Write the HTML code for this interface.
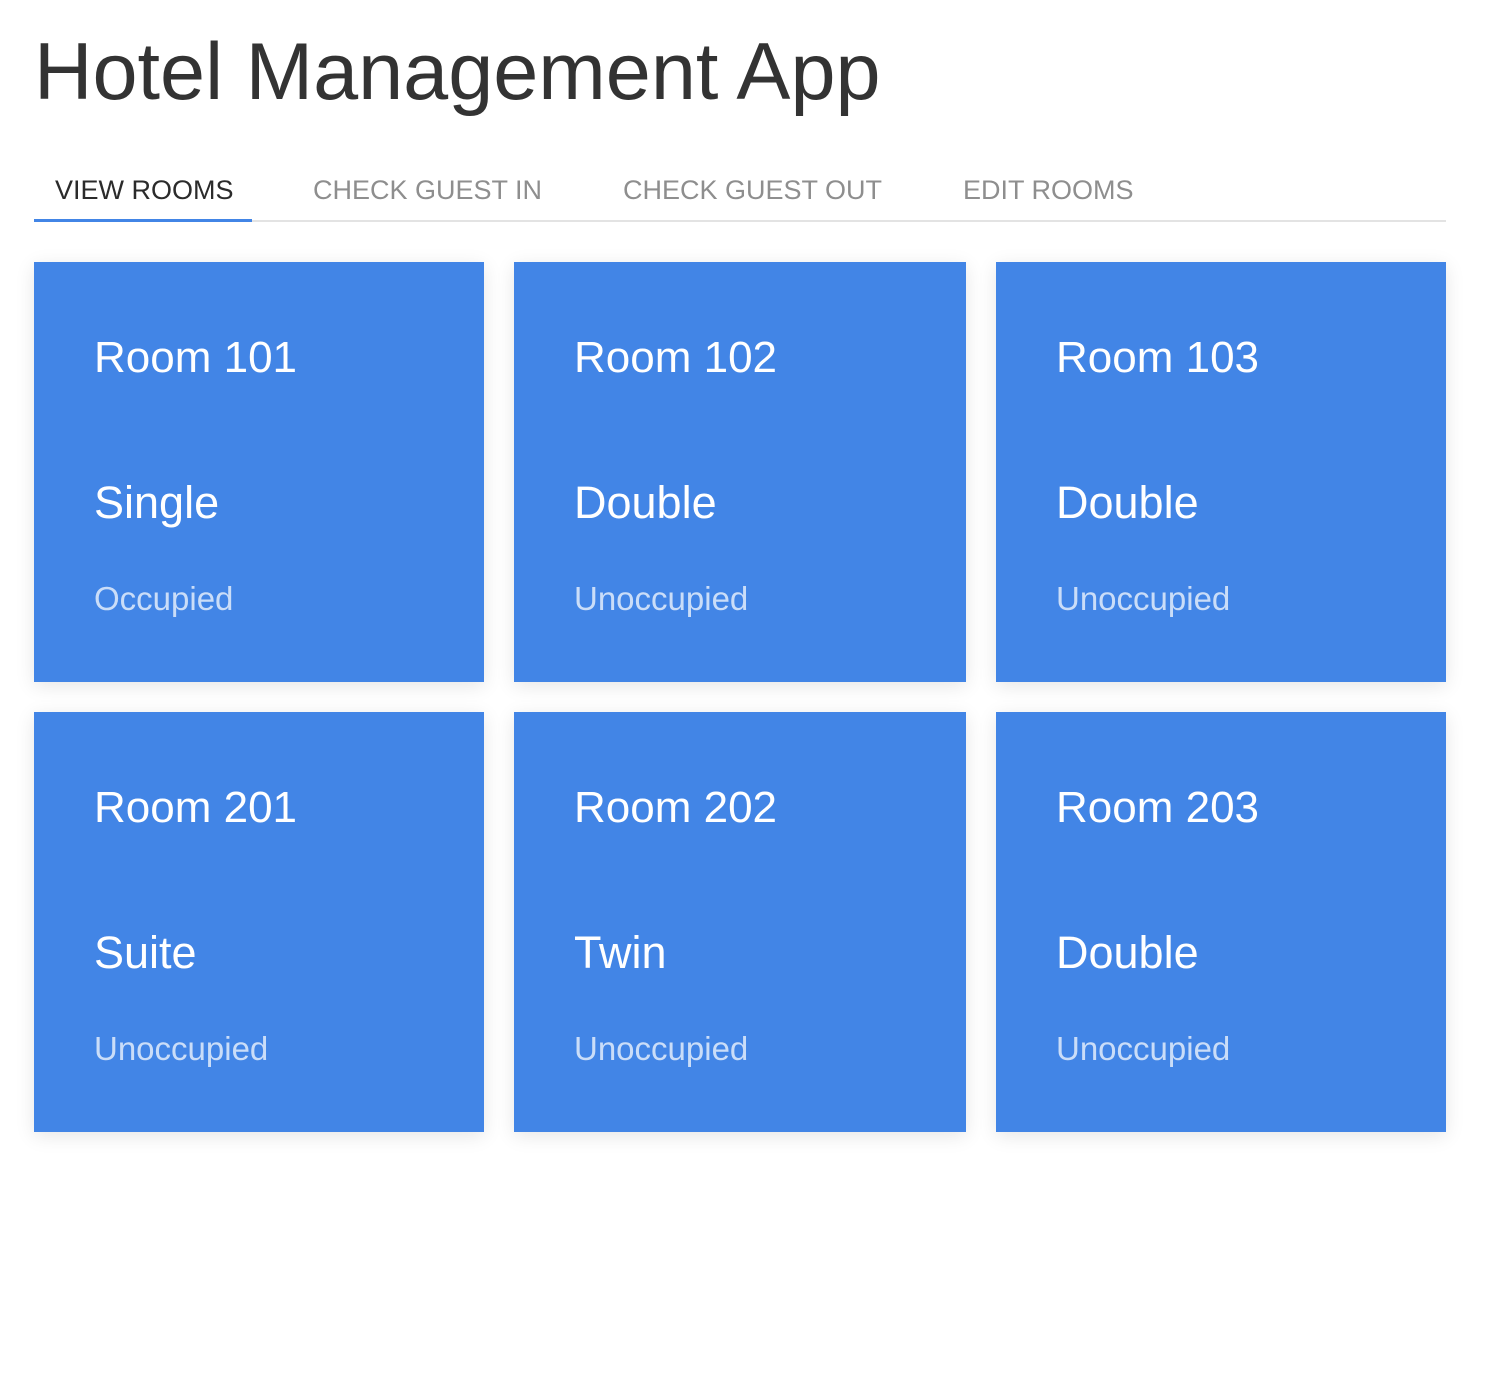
<!DOCTYPE html>
<html><head><meta charset="utf-8"><style>
*{margin:0;padding:0;box-sizing:border-box}
body{width:1494px;height:1398px;background:#fff;font-family:"Liberation Sans",Arial,sans-serif;position:relative;overflow:hidden}
.a{position:absolute;white-space:nowrap;line-height:1}
h1{position:absolute;left:34px;top:32px;font-size:81px;font-weight:400;color:#333;line-height:1;white-space:nowrap}
.tab{font-size:27px;top:177px;color:#8e8e8e}
.card{position:absolute;background:#4285e6;width:450px;height:420px;box-shadow:0 4px 18px rgba(0,0,0,0.10)}
.card .r{position:absolute;left:60px;top:74px;font-size:44px;color:#fff;line-height:1;white-space:nowrap}
.card .t{position:absolute;left:60px;top:218px;font-size:45px;color:#fff;line-height:1;white-space:nowrap}
.card .s{position:absolute;left:60px;top:320px;font-size:33px;color:rgba(255,255,255,0.72);line-height:1;white-space:nowrap}
</style></head><body>
<h1>Hotel Management App</h1>
<div class="a tab" style="left:55px;color:#2b2b2b">VIEW ROOMS</div>
<div class="a tab" style="left:313px">CHECK GUEST IN</div>
<div class="a tab" style="left:623px">CHECK GUEST OUT</div>
<div class="a tab" style="left:963px">EDIT ROOMS</div>
<div style="position:absolute;left:34px;top:220px;width:1412px;height:2px;background:#e3e3e3"></div>
<div style="position:absolute;left:34px;top:219px;width:218px;height:3px;background:#4285e6"></div>

<div class="card" style="left:34px;top:262px"><div class="r">Room 101</div><div class="t">Single</div><div class="s">Occupied</div></div>
<div class="card" style="left:514px;top:262px;width:452px"><div class="r">Room 102</div><div class="t">Double</div><div class="s">Unoccupied</div></div>
<div class="card" style="left:996px;top:262px"><div class="r">Room 103</div><div class="t">Double</div><div class="s">Unoccupied</div></div>
<div class="card" style="left:34px;top:712px"><div class="r">Room 201</div><div class="t">Suite</div><div class="s">Unoccupied</div></div>
<div class="card" style="left:514px;top:712px;width:452px"><div class="r">Room 202</div><div class="t">Twin</div><div class="s">Unoccupied</div></div>
<div class="card" style="left:996px;top:712px"><div class="r">Room 203</div><div class="t">Double</div><div class="s">Unoccupied</div></div>
</body></html>
